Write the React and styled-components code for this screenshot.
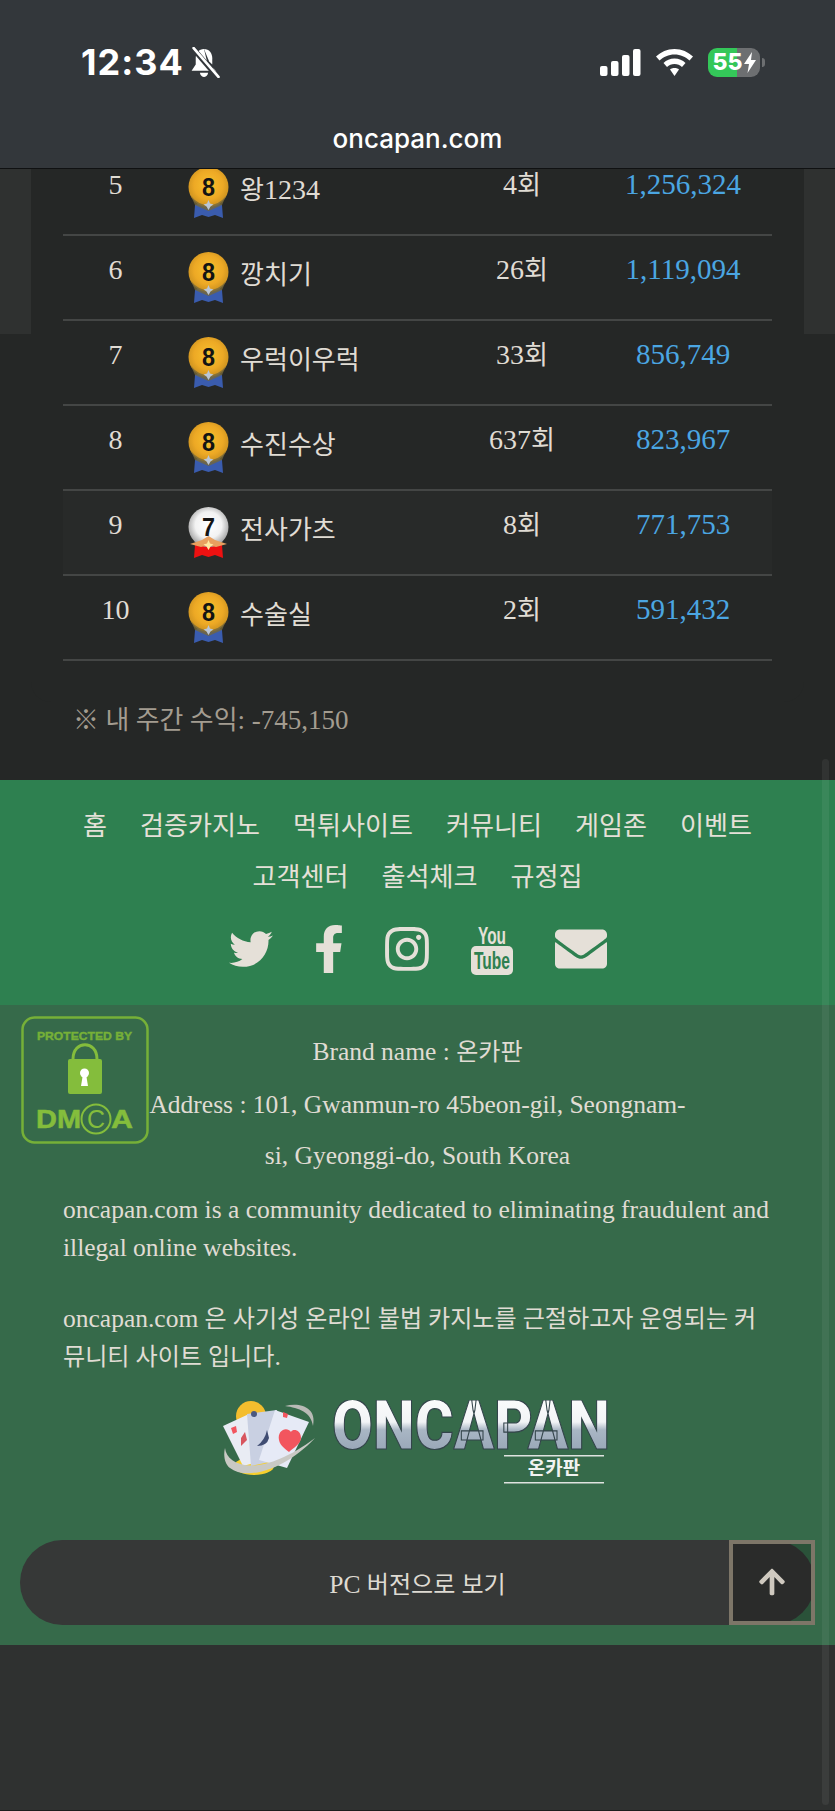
import React from "react";
import styled, { createGlobalStyle } from "styled-components";
import { FaTwitter, FaFacebookF, FaInstagram, FaEnvelope, FaArrowUp } from "react-icons/fa";

const GlobalStyle = createGlobalStyle`
  html, body {
    margin: 0;
    padding: 0;
    background: #2f3130;
  }
  body {
    font-family: "Liberation Serif", "Noto Sans CJK KR", serif;
    color: #e0dcd4;
  }
`;

const ranks = [
  { no: 5, level: 8, name: ["왕", "1234"], count: "4", amount: "1,256,324" },
  { no: 6, level: 8, name: ["깡치기"], count: "26", amount: "1,119,094" },
  { no: 7, level: 8, name: ["우럭이우럭"], count: "33", amount: "856,749" },
  { no: 8, level: 8, name: ["수진수상"], count: "637", amount: "823,967" },
  { no: 9, level: 7, name: ["전사가츠"], count: "8", amount: "771,753", alt: true },
  { no: 10, level: 8, name: ["수술실"], count: "2", amount: "591,432" },
];

const menuLinks = ["홈", "검증카지노", "먹튀사이트", "커뮤니티", "게임존", "이벤트", "고객센터", "출석체크", "규정집"];

function Medal({ level }) {
  const silver = level === 7;
  const id = `medal-${level}`;
  return (
    <svg width="41" height="52" viewBox="0 0 41 52">
      <defs>
        <radialGradient id={id} cx="0.5" cy="0.45" r="0.6">
          {silver ? (
            <>
              <stop offset="0" stopColor="#ffffff" />
              <stop offset="0.55" stopColor="#f2f2f2" />
              <stop offset="1" stopColor="#8f8f8f" />
            </>
          ) : (
            <>
              <stop offset="0" stopColor="#f9c02e" />
              <stop offset="0.6" stopColor="#eda925" />
              <stop offset="1" stopColor="#c18a1e" />
            </>
          )}
        </radialGradient>
      </defs>
      <path d="M7 38 L20.5 33 L34 38 L35 51 L27 48 L20.5 50 L14 48 L6 51 Z" fill={silver ? "#ee1111" : "#3a5cae"} />
      <circle cx="20.5" cy="20" r="20" fill={`url(#${id})`} />
      {silver ? (
        <path d="M2 37 L14 33 L20.5 29 L27 33 L39 37 L28 40 L20.5 38 L13 40 Z" fill="#e8a060" />
      ) : (
        <path d="M3 29 Q10 38 20.5 38 Q31 38 38 29 L34 38 L20.5 44 L7 38 Z" fill="#75683a" opacity="0.8" />
      )}
      <path d="M20.5 33 L22 36.5 L25.5 37.5 L22.5 39.5 L20.5 43 L18.5 39.5 L15.5 37.5 L19 36.5 Z" fill={silver ? "#ffe9a0" : "#b9c6d8"} />
      <text x="20.5" y="29" textAnchor="middle" textLength="13" lengthAdjust="spacingAndGlyphs" fontFamily="Liberation Sans, sans-serif" fontWeight="700" fontSize="25" fill="#141414">
        {level}
      </text>
    </svg>
  );
}

function BellOff() {
  return (
    <svg width="32" height="31" viewBox="0 0 30 30">
      <path d="M15 2 C10 2 7 6 7 11 L7 17 L3 23 L20 23 Z" fill="#fff" />
      <path d="M15 2 C20 2 23 6 23 11 L23 17 L20 14 Z" fill="#fff" />
      <path d="M24 20 L27 24 L24 24 Z" fill="#fff" />
      <path d="M11 25 L19 25 C18.5 28 16.5 29 15 29 C13.5 29 11.5 28 11 25 Z" fill="#fff" />
      <path d="M4 1 L28 29" stroke="#33373b" strokeWidth="5" />
      <path d="M5 1 L29 29" stroke="#fff" strokeWidth="2.6" strokeLinecap="round" />
    </svg>
  );
}

function Signal() {
  return (
    <svg width="41" height="27" viewBox="0 0 41 27">
      <rect x="0" y="17" width="7.5" height="10" rx="2" fill="#fff" />
      <rect x="11" y="12" width="7.5" height="15" rx="2" fill="#fff" />
      <rect x="22" y="6" width="7.5" height="21" rx="2" fill="#fff" />
      <rect x="33" y="0" width="7.5" height="27" rx="2" fill="#fff" />
    </svg>
  );
}

function Wifi() {
  return (
    <svg width="37" height="27" viewBox="0 0 37 27">
      <path d="M18.5 0 C26 0 32 3 37 7.5 L33.5 11.5 C29.5 8 24.5 5.5 18.5 5.5 C12.5 5.5 7.5 8 3.5 11.5 L0 7.5 C5 3 11 0 18.5 0 Z" fill="#fff" />
      <path d="M18.5 9.5 C23 9.5 26.5 11 29.5 14 L26 18 C24 16 21.5 15 18.5 15 C15.5 15 13 16 11 18 L7.5 14 C10.5 11 14 9.5 18.5 9.5 Z" fill="#fff" />
      <path d="M18.5 19 C20.5 19 22 19.5 23 20.5 L18.5 27 L14 20.5 C15 19.5 16.5 19 18.5 19 Z" fill="#fff" />
    </svg>
  );
}

function Bolt() {
  return (
    <svg width="12" height="21" viewBox="0 0 12 21">
      <path d="M8 0 L0 12 L5 12 L3.5 21 L12 8 L7 8 Z" fill="#fff" />
    </svg>
  );
}

function YoutubeStacked() {
  return (
    <svg width="42" height="51" viewBox="0 0 42 51">
      <text x="21" y="20" textAnchor="middle" textLength="28" lengthAdjust="spacingAndGlyphs" fontFamily="Liberation Sans Narrow, Liberation Sans, sans-serif" fontWeight="700" fontSize="23" fill="#e5e0d8">
        You
      </text>
      <rect x="0" y="22" width="42" height="29" rx="5" fill="#e5e0d8" />
      <text x="21" y="45" textAnchor="middle" textLength="36" lengthAdjust="spacingAndGlyphs" fontFamily="Liberation Sans Narrow, Liberation Sans, sans-serif" fontWeight="700" fontSize="24" fill="#2e8050">
        Tube
      </text>
    </svg>
  );
}

function DmcaBadge() {
  return (
    <svg width="128" height="128" viewBox="0 0 128 128">
      <rect x="1.5" y="1.5" width="125" height="125" rx="12" fill="none" stroke="#76b038" strokeWidth="2.5" />
      <text x="16" y="24" textLength="95" lengthAdjust="spacingAndGlyphs" fontFamily="Liberation Sans, sans-serif" fontWeight="700" fontSize="10.5" fill="#76b038" stroke="#76b038" strokeWidth="0.4">
        PROTECTED BY
      </text>
      <path d="M52 43 C52 24 76 24 76 43" fill="none" stroke="#84bd3c" strokeWidth="3" />
      <rect x="47" y="43" width="34" height="35" rx="2" fill="#84bd3c" />
      <circle cx="63.5" cy="57" r="4.5" fill="#fff" />
      <path d="M62 58 L65 58 L67 70 L60 70 Z" fill="#fff" />
      <text x="15" y="112" textLength="45" lengthAdjust="spacingAndGlyphs" fontFamily="Liberation Sans, sans-serif" fontWeight="700" fontSize="26" fill="#84bd3c" stroke="#84bd3c" strokeWidth="0.5">
        DM
      </text>
      <circle cx="75" cy="103" r="14.5" fill="none" stroke="#84bd3c" strokeWidth="2" />
      <text x="75" y="112" textAnchor="middle" fontFamily="Liberation Sans, sans-serif" fontSize="25" fill="#84bd3c">
        C
      </text>
      <text x="90" y="112" textLength="22" lengthAdjust="spacingAndGlyphs" fontFamily="Liberation Sans, sans-serif" fontWeight="700" fontSize="26" fill="#84bd3c" stroke="#84bd3c" strokeWidth="0.5">
        A
      </text>
    </svg>
  );
}

function LogoCards() {
  return (
    <svg width="96" height="82" viewBox="0 0 96 82">
      <circle cx="30" cy="16" r="15" fill="#f3bd2e" />
      <ellipse cx="33" cy="66" rx="20" ry="9" fill="#f7d02e" />
      <path d="M2 26 L28 14 L44 60 L22 66 Z" fill="#e9ecf4" />
      <path d="M26 14 L56 10 L58 60 L30 66 Z" fill="#c9d0e2" />
      <path d="M54 10 L88 22 L66 68 L38 60 Z" fill="#e6eaf6" />
      <circle cx="33" cy="14" r="3" fill="#4a5880" />
      <path d="M46 30 Q44 40 36 46 Q46 46 48 38 Z" fill="#3f4c72" />
      <path d="M70 32 C66 26 56 30 58 40 C59 46 66 50 68 52 C72 48 80 44 80 38 C80 30 72 28 70 32 Z" fill="#f2555e" />
      <path d="M10 28 L15 26 L16 32 L12 34 Z" fill="#f2555e" />
      <path d="M24 32 L26 40 L20 46 L20 38 Z" fill="#d8555e" />
      <path d="M62 12 L67 14 L66 18 L62 17 Z" fill="#f2555e" />
      <path d="M4 48 C6 66 38 80 94 38 C62 72 24 80 9 68 C4 64 2 56 4 48 Z" fill="#c9c9c4" />
      <path d="M64 6 C80 2 96 8 92 26 C90 12 78 8 64 6 Z" fill="#b9bab6" />
    </svg>
  );
}

function LogoWord() {
  return (
    <svg width="280" height="84" viewBox="0 0 280 84">
      <defs>
        <linearGradient id="logo-metal" x1="0" y1="0" x2="0" y2="1">
          <stop offset="0" stopColor="#ffffff" />
          <stop offset="0.45" stopColor="#f2f4f6" />
          <stop offset="0.55" stopColor="#a9b6c4" />
          <stop offset="1" stopColor="#8d9caf" />
        </linearGradient>
      </defs>
      <text x="1" y="49" textLength="278" lengthAdjust="spacingAndGlyphs" fontFamily="Roboto, Liberation Sans, sans-serif" fontWeight="900" fontSize="68" fill="url(#logo-metal)" stroke="#33444a" strokeWidth="1.2">
        ONCAPAN
      </text>
      <rect x="173" y="55" width="100" height="1.5" fill="#dfe3e0" />
      <text x="223" y="75" textAnchor="middle" fontFamily="Noto Sans CJK KR, sans-serif" fontWeight="700" fontSize="19" fill="#f1f3f1">
        온카판
      </text>
      <rect x="173" y="82" width="100" height="1.5" fill="#dfe3e0" />
    </svg>
  );
}

export default function App() {
  return (
    <>
      <GlobalStyle />
      <Page>
        <TopBar>
          <StatusRow>
            <TimeGroup>
              <Time>12:34</Time>
              <BellOff />
            </TimeGroup>
            <StatusIcons>
              <Signal />
              <Wifi />
              <Battery>
                <BatteryText>55</BatteryText>
                <Bolt />
              </Battery>
            </StatusIcons>
          </StatusRow>
          <UrlText>oncapan.com</UrlText>
        </TopBar>

        <Main>
          <Card>
            <RankTable>
              {ranks.map((r) => (
                <RankRow key={r.no} $alt={r.alt}>
                  <NoCell>{r.no}</NoCell>
                  <NameCell>
                    <Medal level={r.level} />
                    <NameText>
                      <Ko>{r.name[0]}</Ko>
                      {r.name[1]}
                    </NameText>
                  </NameCell>
                  <CountCell>
                    {r.count}
                    <Ko>회</Ko>
                  </CountCell>
                  <Amount>{r.amount}</Amount>
                </RankRow>
              ))}
            </RankTable>
          </Card>
          <WeeklyNote>
            <Ko>※ 내 주간 수익</Ko>: -745,150
          </WeeklyNote>
        </Main>

        <NavSection>
          <MenuList>
            {menuLinks.map((m) => (
              <MenuLink key={m}>{m}</MenuLink>
            ))}
          </MenuList>
          <SocialRow>
            <TwitterIcon />
            <FacebookIcon />
            <InstagramIcon />
            <YoutubeStacked />
            <MailIcon />
          </SocialRow>
        </NavSection>

        <InfoSection>
          <BadgeSlot>
            <DmcaBadge />
          </BadgeSlot>
          <CompanyLines>
            Brand name : <Ko>온카판</Ko>
            <br />
            Address : 101, Gwanmun-ro 45beon-gil, Seongnam-si, Gyeonggi-do, South Korea
          </CompanyLines>
          <AboutText>oncapan.com is a community dedicated to eliminating fraudulent and illegal online websites.</AboutText>
          <AboutText>
            oncapan.com <Ko>은 사기성 온라인 불법 카지노를 근절하고자 운영되는 커뮤니티 사이트 입니다</Ko>.
          </AboutText>
          <LogoRow>
            <LogoCards />
            <LogoWord />
          </LogoRow>
          <PcButton>
            <span>
              PC <Ko>버전으로 보기</Ko>
            </span>
            <ToTop>
              <FaArrowUp size={30} />
            </ToTop>
          </PcButton>
        </InfoSection>

        <BottomSpace />
        <ScrollThumb />
      </Page>
    </>
  );
}

const Page = styled.div`
  position: relative;
  width: 835px;
  height: 1811px;
  overflow: hidden;
  background: #2f3130;
`;

const TopBar = styled.header`
  position: relative;
  z-index: 2;
  box-sizing: border-box;
  height: 169px;
  background: #33373b;
  border-bottom: 1px solid #101112;
  font-family: Inter, "Liberation Sans", sans-serif;
  color: #fff;
`;

const StatusRow = styled.div`
  display: flex;
  justify-content: space-between;
  align-items: center;
  height: 30px;
  padding: 47px 75px 0 81px;
`;

const TimeGroup = styled.div`
  display: flex;
  align-items: center;
  gap: 4px;
`;

const Time = styled.span`
  font-size: 36px;
  font-weight: 700;
  letter-spacing: 1px;
`;

const StatusIcons = styled.div`
  display: flex;
  align-items: center;
  gap: 15px;
`;

const Battery = styled.div`
  position: relative;
  display: flex;
  align-items: center;
  justify-content: center;
  gap: 1px;
  width: 52px;
  height: 29px;
  border-radius: 9px;
  background: linear-gradient(90deg, #34c759 0 56%, #6d6f71 56% 100%);

  &::after {
    content: "";
    position: absolute;
    right: -5px;
    top: 10px;
    width: 3px;
    height: 9px;
    border-radius: 0 3px 3px 0;
    background: #6d6f71;
  }
`;

const BatteryText = styled.span`
  font-size: 23px;
  font-weight: 800;
  line-height: 1;
`;

const UrlText = styled.div`
  margin-top: 47px;
  text-align: center;
  font-size: 26px;
  font-weight: 500;
  line-height: 30px;
`;

const Main = styled.main`
  overflow: hidden;
  height: 611px;
  background: linear-gradient(#2f3130 165px, #252726 165px);
`;

const Card = styled.section`
  margin: 0 31px;
  padding: 0 32px;
  height: 533px;
  box-sizing: border-box;
  overflow: hidden;
  background: #252726;
  border-radius: 0 0 20px 20px;
`;

const RankTable = styled.div`
  margin-top: -18px;
`;

const Ko = styled.span`
  font-size: 0.945em;
`;

const RankRow = styled.div`
  display: grid;
  grid-template-columns: 105px 281px 146px 176px;
  align-items: center;
  box-sizing: border-box;
  height: 85px;
  border-bottom: 2px solid #444645;
  background: ${(p) => (p.$alt ? "#282a29" : "transparent")};
  font-size: 28px;
  color: #e0dcd4;

  ${Ko} {
    font-size: 0.93em;
  }
`;

const NoCell = styled.div`
  text-align: center;
  padding-bottom: 15px;
`;

const CountCell = styled(NoCell)`
  padding-bottom: 20px;
`;

const NameCell = styled.div`
  display: flex;
  align-items: center;
  gap: 11px;
  padding-left: 20px;
`;

const NameText = styled.span`
  padding-bottom: 10px;
`;

const Amount = styled(NoCell)`
  font-size: 29px;
  padding-bottom: 17px;
  color: #4ba6e2;
`;

const WeeklyNote = styled.div`
  padding: 1px 0 0 73px;
  font-size: 27px;
  line-height: 34px;
  color: #a39c90;

  ${Ko} {
    font-size: 0.96em;
  }
`;

const NavSection = styled.nav`
  box-sizing: border-box;
  height: 225px;
  padding: 21px 32px 0;
  background: #2e8050;
`;

const MenuList = styled.div`
  display: flex;
  flex-wrap: wrap;
  justify-content: center;
  column-gap: 33px;
`;

const MenuLink = styled.a`
  font-size: 26.1px;
  line-height: 51px;
  color: #e5e0d8;
`;

const SocialRow = styled.div`
  display: flex;
  align-items: center;
  justify-content: center;
  gap: 42px;
  margin-top: 20px;
  color: #e5e0d8;
`;

const TwitterIcon = styled(FaTwitter)`
  width: 44px;
  height: 44px;
`;

const FacebookIcon = styled(FaFacebookF)`
  width: 30px;
  height: 48px;
  margin: 0 -1px;
`;

const InstagramIcon = styled(FaInstagram)`
  width: 44px;
  height: 50px;
`;

const MailIcon = styled(FaEnvelope)`
  width: 52px;
  height: 52px;
`;

const InfoSection = styled.section`
  position: relative;
  box-sizing: border-box;
  height: 640px;
  padding: 21px 20px 0;
  background: #366a4a;
  color: #e0dcd4;
`;

const BadgeSlot = styled.div`
  position: absolute;
  left: 21px;
  top: 11px;
`;

const CompanyLines = styled.p`
  width: 545px;
  margin: 0 auto;
  text-align: center;
  font-size: 25.5px;
  line-height: 51.5px;
`;

const AboutText = styled.p`
  margin: 9px 43px 32px;
  font-size: 25.5px;
  line-height: 38.5px;
`;

const LogoRow = styled.div`
  display: flex;
  align-items: flex-start;
  justify-content: center;
  gap: 14px;
  margin: -9px 0 0;
  padding-right: 4px;
`;

const PcButton = styled.div`
  position: relative;
  display: flex;
  align-items: center;
  justify-content: center;
  height: 85px;
  margin-top: 56px;
  border-radius: 43px;
  background: #363837;
  font-size: 25.5px;
  color: #dedad2;
`;

const ToTop = styled.div`
  position: absolute;
  right: 0;
  top: 0;
  box-sizing: border-box;
  display: flex;
  align-items: center;
  justify-content: center;
  width: 86px;
  height: 85px;
  border: 4px solid #7d7668;
  background: rgba(0, 0, 0, 0.22);
  color: #cfc9bf;
`;

const BottomSpace = styled.div`
  height: 166px;
  border-bottom: 1px solid #1d1e1e;
  box-sizing: border-box;
  background: #2f3130;
`;

const ScrollThumb = styled.div`
  position: absolute;
  right: 6px;
  top: 759px;
  bottom: 6px;
  width: 7px;
  border-radius: 4px;
  background: rgba(255, 255, 255, 0.06);
`;
